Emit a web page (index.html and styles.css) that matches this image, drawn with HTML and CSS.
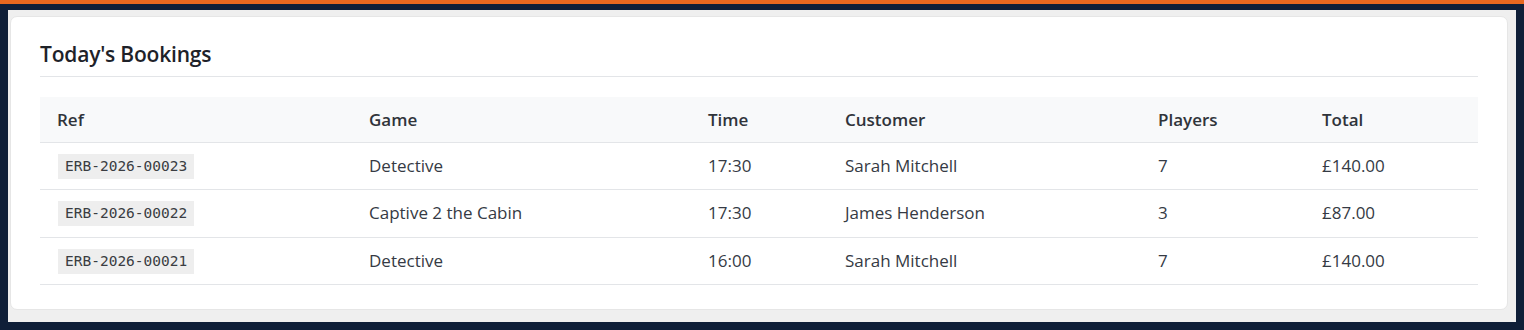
FILE: index.html
```html
<!DOCTYPE html>
<html lang="en">
<head>
<meta charset="utf-8">
<title>Today's Bookings</title>
<link rel="stylesheet" href="styles.css">
</head>
<body>
<div class="topbar"></div>
<div class="frame">
  <div class="page">
    <section class="card">
      <h2 class="card-title">Today's Bookings</h2>
      <table class="bookings">
        <thead>
          <tr>
            <th class="c-ref">Ref</th>
            <th class="c-game">Game</th>
            <th class="c-time">Time</th>
            <th class="c-cust">Customer</th>
            <th class="c-players">Players</th>
            <th class="c-total">Total</th>
          </tr>
        </thead>
        <tbody>
          <tr>
            <td><code class="ref">ERB-2026-00023</code></td>
            <td>Detective</td>
            <td>17:30</td>
            <td>Sarah Mitchell</td>
            <td>7</td>
            <td>£140.00</td>
          </tr>
          <tr>
            <td><code class="ref">ERB-2026-00022</code></td>
            <td>Captive 2 the Cabin</td>
            <td>17:30</td>
            <td>James Henderson</td>
            <td>3</td>
            <td>£87.00</td>
          </tr>
          <tr>
            <td><code class="ref">ERB-2026-00021</code></td>
            <td>Detective</td>
            <td>16:00</td>
            <td>Sarah Mitchell</td>
            <td>7</td>
            <td>£140.00</td>
          </tr>
        </tbody>
      </table>
    </section>
  </div>
</div>
</body>
</html>
```

FILE: styles.css
```css
html, body {
  margin: 0;
  padding: 0;
}
body {
  background: #0f1f38;
  font-family: "Open Sans", "Noto Sans", sans-serif;
  color: #353a44;
  width: 1524px;
  height: 330px;
  overflow: hidden;
}
.topbar {
  height: 4px;
  background: #e8681f;
}
.frame {
  padding: 6px 8px 8px 8px;
}
.page {
  background: #efefef;
  padding: 6px 8px 12px 2px;
  height: 294px;
}
.card {
  background: #ffffff;
  border: 1px solid #e6e6e6;
  border-radius: 7px;
  padding: 25px 29px 24px 29px;
  box-sizing: border-box;
  height: 294px;
}
.card-title {
  margin: 0;
  font-size: 21px;
  line-height: 24px;
  font-weight: 600;
  color: #1e2229;
  padding-bottom: 10px;
  border-bottom: 1px solid #e3e5e8;
  letter-spacing: -0.2px;
}
.bookings {
  margin-top: 20px;
  width: 100%;
  border-collapse: collapse;
  font-size: 17px;
}
.bookings th {
  background: #f8f9fa;
  text-align: left;
  font-weight: 600;
  color: #30343a;
  padding: 11px 17px 10px 17px;
  line-height: 24px;
  border-bottom: 1px solid #e3e5e8;
}
.bookings td {
  padding: 11px 17px 11.34px 17px;
  height: 24px;
  line-height: 24px;
  border-bottom: 1px solid #e3e5e8;
  color: #353a44;
}
.c-ref { width: 278px; }
.c-game { width: 305px; }
.c-time { width: 103px; }
.c-cust { width: 279px; }
.c-players { width: 130px; }
.ref {
  display: inline-block;
  font-family: "DejaVu Sans Mono", "Liberation Mono", monospace;
  font-size: 14.5px;
  line-height: 25px;
  margin: 0 0 -1px 1px;
  background: #eeeeee;
  color: #3a3d42;
  padding: 0 7px;
  vertical-align: top;
}
```
